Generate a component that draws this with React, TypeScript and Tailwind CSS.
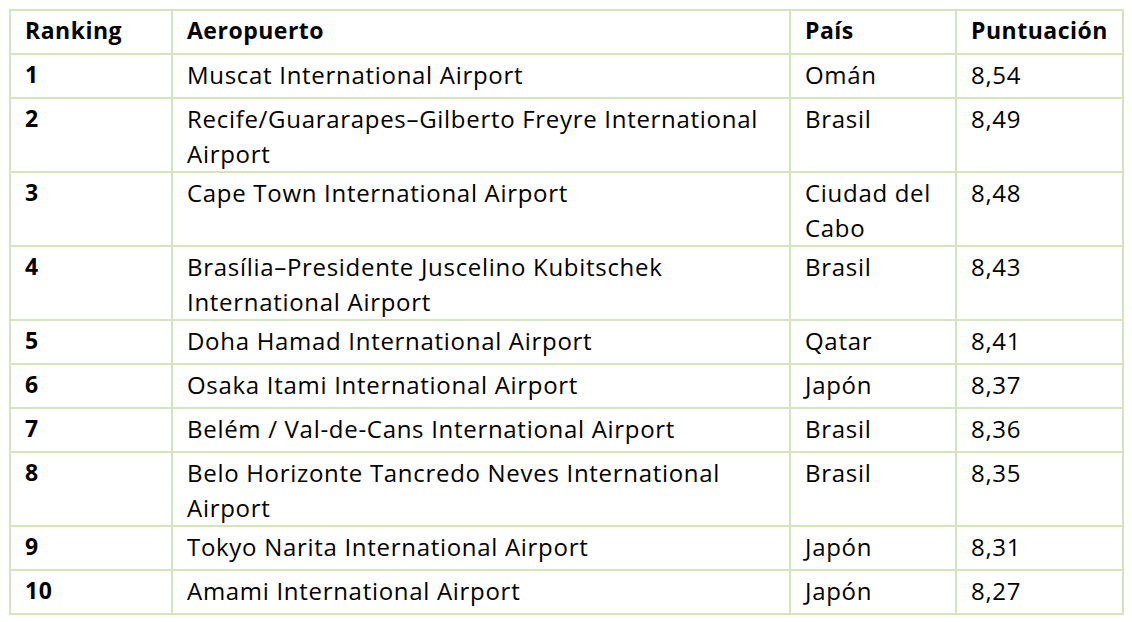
const rows: { rank: string; airport: string[]; country: string[]; score: string }[] = [
  { rank: "1", airport: ["Muscat International Airport"], country: ["Omán"], score: "8,54" },
  {
    rank: "2",
    airport: ["Recife/Guararapes–Gilberto Freyre International", "Airport"],
    country: ["Brasil"],
    score: "8,49",
  },
  { rank: "3", airport: ["Cape Town International Airport"], country: ["Ciudad del", "Cabo"], score: "8,48" },
  {
    rank: "4",
    airport: ["Brasília–Presidente Juscelino Kubitschek", "International Airport"],
    country: ["Brasil"],
    score: "8,43",
  },
  { rank: "5", airport: ["Doha Hamad International Airport"], country: ["Qatar"], score: "8,41" },
  { rank: "6", airport: ["Osaka Itami International Airport"], country: ["Japón"], score: "8,37" },
  { rank: "7", airport: ["Belém / Val-de-Cans International Airport"], country: ["Brasil"], score: "8,36" },
  {
    rank: "8",
    airport: ["Belo Horizonte Tancredo Neves International", "Airport"],
    country: ["Brasil"],
    score: "8,35",
  },
  { rank: "9", airport: ["Tokyo Narita International Airport"], country: ["Japón"], score: "8,31" },
  { rank: "10", airport: ["Amami International Airport"], country: ["Japón"], score: "8,27" },
]

const cell = "bg-white pl-[14px] pt-[2px] min-h-[42px] leading-[35px] whitespace-nowrap"
const body = `${cell} text-[24px] tracking-[0.7px]`
const bold = `${cell} text-[23px] tracking-[0.5px] font-bold`

function Lines({ items }: { items: string[] }) {
  return (
    <>
      {items.map((t, i) => (
        <div key={i}>{t}</div>
      ))}
    </>
  )
}

export default function App() {
  return (
    <div className="w-[1132px] h-[622px] bg-white pt-[9px] pl-[9px] font-['Open_Sans',sans-serif] text-black">
      <div className="inline-grid grid-cols-[160px_616px_164px_165px] gap-[2px] p-[2px] bg-[#d6e3bc]">
        {/* Header */}
        <div className={bold}>Ranking</div>
        <div className={bold}>Aeropuerto</div>
        <div className={bold}>País</div>
        <div className={bold}>Puntuación</div>

        {rows.map((r) => (
          <div key={r.rank} className="contents">
            <div className={bold}>{r.rank}</div>
            <div className={body}>
              <Lines items={r.airport} />
            </div>
            <div className={body}>
              <Lines items={r.country} />
            </div>
            <div className={body}>{r.score}</div>
          </div>
        ))}
      </div>
    </div>
  )
}
